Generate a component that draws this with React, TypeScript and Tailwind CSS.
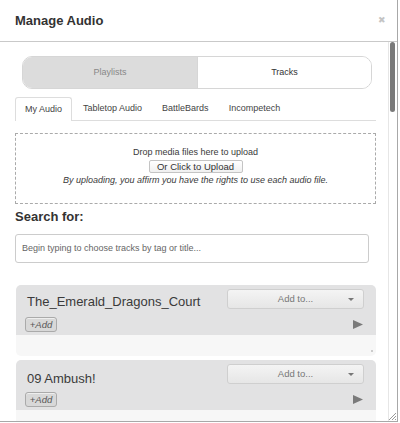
import React from 'react';

const tracks = [
    { title: 'The_Emerald_Dragons_Court', offset: 'mt-[5px]' },
    { title: '09 Ambush!', offset: 'mt-[7px]' },
];

const tabs = ['My Audio', 'Tabletop Audio', 'BattleBards', 'Incompetech'];

function TrackCard({ title, offset, dot }: { title: string; offset: string; dot?: boolean }) {
    return (
        <div className="ml-[1px] w-[360px] mb-[4px] rounded-[5px] overflow-hidden">
            <div className="bg-[#e2e2e3] pt-[4px] pb-[3px] pl-[9px] pr-[12px]">
                {/* Title + Add to */}
                <div className="flex justify-between items-start h-[25px]">
                    <div className={`${offset} ml-[2px] text-[13px] leading-[16px] text-[#3a3a3a]`}>{title}</div>
                    <div className="relative w-[137px] h-[20px] rounded-[3px] border border-[#cfcfcf] bg-gradient-to-b from-[#f4f4f4] to-[#e6e6e6] flex items-center justify-center text-[9.5px] text-[#777]">
                        Add to...
                        <span className="absolute right-[9px] top-[8px] w-0 h-0 border-l-[3px] border-r-[3px] border-t-[3px] border-l-transparent border-r-transparent border-t-[#777]" />
                    </div>
                </div>
                {/* +Add + play */}
                <div className="flex justify-between items-center mt-[3px]">
                    <button className="h-[15px] w-[32px] rounded-[3px] border border-[#aaa] bg-[#d8d8d8] text-[9.5px] italic text-[#555] leading-none shadow-[inset_0_1px_0_#eee]">
                        +Add
                    </button>
                    <svg width="10" height="9" viewBox="0 0 10 9" className="mr-[1px]">
                        <path d="M0 0 L10 4.5 L0 9 Z" fill="#7a7a7a" />
                    </svg>
                </div>
            </div>
            <div className="relative bg-[#f7f7f7] h-[21px]">
                {dot && <span className="absolute right-[3px] bottom-[4px] w-[2px] h-[2px] bg-[#ccc]" />}
            </div>
        </div>
    );
}

export default function App() {
    return (
        <div className="w-[400px] h-[423px] bg-white overflow-hidden" style={{ fontFamily: '"Liberation Sans", Arial, sans-serif' }}>
            <div className="relative w-[398px] h-[422px] border-r border-b border-[#a8a8a8] flex flex-col overflow-hidden">
                {/* Header */}
                <div className="h-[42px] shrink-0 border-b border-[#c9c9c9] flex items-center justify-between pl-[15px] pr-[11px]">
                    <h1 className="text-[13px] font-bold text-[#333]">Manage Audio</h1>
                    <span className="text-[9px] text-[#c4c4c4] leading-none">&#x2716;</span>
                </div>

                <div className="flex flex-1 min-h-0">
                    {/* Content */}
                    <div className="flex-1 min-w-0 pl-[15px] pr-[12px] text-[#3a3a3a]">
                        {/* Segmented */}
                        <div className="mt-[14px] ml-[7px] w-[350px] h-[33px] rounded-[10px] border border-[#d6d6d6] flex overflow-hidden text-[9px]">
                            <div className="w-1/2 bg-[#dcdcdc] flex items-center justify-center text-[#888]">Playlists</div>
                            <div className="w-1/2 bg-white border-l border-[#d6d6d6] flex items-center justify-center text-[#333]">Tracks</div>
                        </div>

                        {/* Tabs */}
                        <div className="mt-[8px] flex border-b border-[#ddd] h-[24px] text-[9px] text-[#444]">
                            {tabs.map((t, i) => (
                                <div
                                    key={t}
                                    className={
                                        i === 0
                                            ? 'px-[9px] mr-[2px] flex items-center border border-b-0 border-[#ddd] rounded-t-[3px] bg-white -mb-[1px] h-[24px]'
                                            : 'px-[9px] mr-[2px] flex items-center'
                                    }
                                >
                                    {t}
                                </div>
                            ))}
                        </div>

                        {/* Dropzone */}
                        <div className="mt-[12px] h-[71px] border border-dashed border-[#aaa] flex flex-col items-center pt-[12px] text-[9px] leading-[13px]">
                            <div>Drop media files here to upload</div>
                            <button className="mt-[1px] h-[13px] w-[94px] rounded-[2px] border border-[#c4c4c4] bg-gradient-to-b from-white to-[#f0f0f0] text-[9.5px] leading-none text-[#333]">
                                Or Click to Upload
                            </button>
                            <div className="italic mt-[1px]">By uploading, you affirm you have the rights to use each audio file.</div>
                        </div>

                        {/* Search */}
                        <div className="mt-[5px] text-[13px] font-bold leading-[16px] text-[#333]">Search for:</div>
                        <div className="mt-[9px] w-[354px] h-[29px] rounded-[3px] border border-[#ccc] flex items-center pl-[6px] text-[9px] text-[#666]">
                            Begin typing to choose tracks by tag or title...
                        </div>

                        {/* Tracks */}
                        <div className="mt-[22px]">
                            {tracks.map((t, i) => (
                                <TrackCard key={t.title} title={t.title} offset={t.offset} dot={i === 0} />
                            ))}
                        </div>
                    </div>

                    {/* Scrollbar */}
                    <div className="w-[9px] shrink-0 border-l border-[#e6e6e6] pl-[1px] pr-[1px]">
                        <div className="w-[5px] h-[70px] rounded-full bg-[#7a7a7a]" />
                    </div>
                </div>

                {/* Resize handle */}
                <svg width="8" height="8" viewBox="0 0 8 8" className="absolute right-[1px] bottom-[1px]">
                    <path d="M8 1 L1 8 M8 4 L4 8 M8 7 L7 8" stroke="#999" strokeWidth="1" />
                </svg>
            </div>
        </div>
    );
}
